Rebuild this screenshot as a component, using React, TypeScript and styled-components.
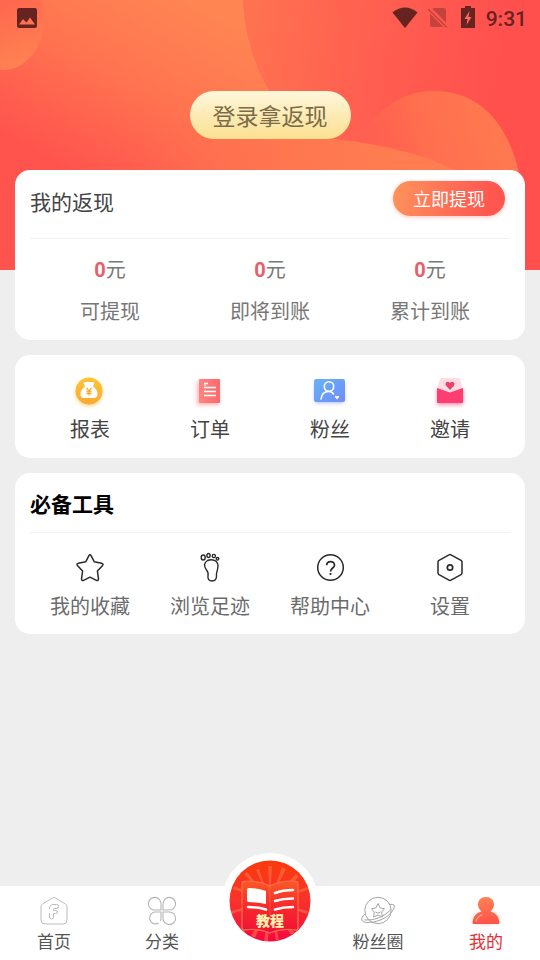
import React from "react";
import styled, { createGlobalStyle } from "styled-components";

const GlobalStyle = createGlobalStyle`
  * { box-sizing: border-box; }
  body {
    margin: 0;
    background: #eeeeee;
    font-family: Roboto, "Noto Sans CJK SC", sans-serif;
  }
  button { font-family: inherit; border: 0; padding: 0; background: none; cursor: pointer; }
`;

const Page = styled.div`
  min-height: 100vh;
  display: flex;
  flex-direction: column;
`;

const Hero = styled.header`
  position: relative;
  display: flex;
  flex-direction: column;
  align-items: center;
  height: 270px;
  margin-bottom: -100px;
  background: #ff5450;
`;

const HeroArt = styled.svg`
  position: absolute;
  inset: 0;
  width: 100%;
  height: 100%;
`;

const StatusBar = styled.div`
  position: relative;
  align-self: stretch;
  display: flex;
  align-items: center;
  justify-content: space-between;
  height: 36px;
  padding: 0 13px 0 15px;
  color: #66231f;
`;

const StatusGroup = styled.div`
  display: flex;
  align-items: center;
`;

const Clock = styled.time`
  margin-left: 10px;
  padding-top: 2px;
  font-size: 21px;
  line-height: 34px;
  font-weight: 500;
`;

const LoginButton = styled.button`
  position: relative;
  margin-top: 55px;
  height: 48px;
  padding: 0 23px;
  border-radius: 24px;
  background: linear-gradient(#fff7dc, #fbe090);
  color: #7a6c49;
  font-family: "Noto Sans CJK SC", sans-serif;
  font-size: 23px;
  line-height: 48px;
`;

const Content = styled.main`
  position: relative;
  flex: 1;
  display: flex;
  flex-direction: column;
  gap: 15px;
  padding: 0 15px 60px;
`;

const Card = styled.section`
  padding: 0 15px;
  border-radius: 15px;
  background: #ffffff;
`;

const CardHeader = styled.div<{ $tall?: boolean }>`
  display: flex;
  align-items: flex-end;
  justify-content: space-between;
  padding: ${(p) => (p.$tall ? "11px 5px 22px 0" : "15px 0 14px")};
  border-bottom: 1px solid #f1f1f1;
`;

const CardTitle = styled.h2<{ $strong?: boolean }>`
  margin: 0;
  font-family: "Noto Sans CJK SC", sans-serif;
  font-size: 21px;
  line-height: 30px;
  font-weight: ${(p) => (p.$strong ? 700 : 400)};
  color: ${(p) => (p.$strong ? "#000000" : "#444444")};
`;

const WithdrawButton = styled.button`
  height: 35px;
  padding: 0 20px;
  border-radius: 18px;
  background: linear-gradient(100deg, #ff935c 0%, #ff5650 85%);
  box-shadow: 0 1px 4px rgba(255, 86, 80, 0.35);
  color: #ffffff;
  font-family: "Noto Sans CJK SC", sans-serif;
  font-size: 18px;
  line-height: 35px;
`;

const StatRow = styled.div`
  display: grid;
  grid-template-columns: repeat(3, 1fr);
  padding: 16px 0 13px;
`;

const Stat = styled.div`
  display: flex;
  flex-direction: column;
  align-items: center;
  gap: 12px;
  font-size: 20px;
  line-height: 30px;
  color: #777777;
`;

const Amount = styled.strong`
  color: #e5606a;
`;

const ShortcutRow = styled.div<{ $compact?: boolean }>`
  display: grid;
  grid-template-columns: repeat(4, 1fr);
  padding: ${(p) => (p.$compact ? "17px 0 12px" : "18px 0 13px")};
`;

const Shortcut = styled.button<{ $muted?: boolean }>`
  display: flex;
  flex-direction: column;
  align-items: center;
  gap: 6px;
  font-size: 20px;
  line-height: 30px;
  color: ${(p) => (p.$muted ? "#6b6b6b" : "#444444")};
`;

const TabBar = styled.nav`
  position: sticky;
  bottom: 0;
  display: grid;
  grid-template-columns: repeat(5, 1fr);
  background: #ffffff;
`;

const Tab = styled.button<{ $active?: boolean }>`
  display: flex;
  flex-direction: column;
  align-items: center;
  gap: 3px;
  padding: 9px 0 6px;
  font-size: 17px;
  line-height: 24px;
  color: ${(p) => (p.$active ? "#e52e36" : "#555555")};
`;

const TutorialSlot = styled.div`
  position: relative;
`;

const TutorialButton = styled.button`
  position: absolute;
  left: 50%;
  bottom: 11px;
  width: 96px;
  height: 96px;
  margin-left: -48px;
  border-radius: 50%;
  background: #ffffff;
  display: grid;
  place-items: center;
`;

const HeroBackground = () => (
  <HeroArt viewBox="0 0 540 270" preserveAspectRatio="none" aria-hidden="true">
    <defs>
      <linearGradient id="warm" gradientUnits="userSpaceOnUse" x1="235" y1="20" x2="130" y2="205">
        <stop offset="0" stopColor="#ff8653" />
        <stop offset="0.5" stopColor="#ff7350" />
        <stop offset="1" stopColor="#ff544e" />
      </linearGradient>
      <linearGradient id="wave" gradientUnits="userSpaceOnUse" x1="150" y1="200" x2="400" y2="140">
        <stop offset="0" stopColor="#ff6c4f" stopOpacity="0" />
        <stop offset="0.5" stopColor="#ff754f" />
        <stop offset="1" stopColor="#ff7d50" />
      </linearGradient>
      <linearGradient id="right" gradientUnits="userSpaceOnUse" x1="245" y1="40" x2="500" y2="75">
        <stop offset="0" stopColor="#ff7250" />
        <stop offset="0.5" stopColor="#ff5f50" />
        <stop offset="1" stopColor="#ff504e" />
      </linearGradient>
      <linearGradient id="hill" gradientUnits="userSpaceOnUse" x1="490" y1="120" x2="365" y2="160">
        <stop offset="0" stopColor="#ff784f" />
        <stop offset="0.55" stopColor="#ff6e4f" />
        <stop offset="1" stopColor="#ff684f" stopOpacity="0" />
      </linearGradient>
      <linearGradient id="corner" gradientUnits="userSpaceOnUse" x1="5" y1="5" x2="30" y2="65">
        <stop offset="0" stopColor="#ff684f" />
        <stop offset="1" stopColor="#ff8352" />
      </linearGradient>
    </defs>
    <rect width="540" height="270" fill="url(#warm)" />
    <path d="M243 0C245 40 256 68 270 92C285 120 305 134 335 139L440 270H540V0Z" fill="url(#right)" />
    <path d="M345 160C370 112 400 91 434 91C480 91 508 124 519 173V190H345Z" fill="url(#hill)" />
    <path d="M150 120L300 130Q315 137 335 139C385 145 420 153 455 170V180H120Z" fill="url(#wave)" />
    <ellipse cx="3" cy="20" rx="41" ry="50" fill="url(#corner)" />
  </HeroArt>
);

const PictureIcon = () => (
  <svg width="24" height="24" viewBox="0 0 24 24" aria-hidden="true">
    <path fill="currentColor" fillRule="evenodd" d="M4 2H20Q22 2 22 4V20Q22 22 20 22H4Q2 22 2 20V4Q2 2 4 2ZM4 18.500H20L15 11.500L11.500 16.500L8 13Z" />
  </svg>
);

const WifiIcon = () => (
  <svg width="26" height="24" viewBox="0 0 26 24" aria-hidden="true">
    <path fill="currentColor" d="M13 22L0.500 6.500Q13-3.500 25.500 6.500Z" />
  </svg>
);

const NoSimIcon = () => (
  <svg width="42" height="24" viewBox="0 0 42 24" aria-hidden="true">
    <g opacity="0.38">
      <path fill="currentColor" d="M14.500 3L16 2H26Q28 2 28 4V16.500ZM12 7.500L25.500 21H14Q12 21 12 19Z" />
      <path stroke="currentColor" strokeWidth="1.500" d="M10 3L29 21.500" />
    </g>
  </svg>
);

const BatteryIcon = () => (
  <svg width="16" height="24" viewBox="0 0 16 24" aria-hidden="true">
    <path fill="currentColor" d="M5 0H11V2H15V22H1V2H5Z" />
    <path fill="#ff6a62" d="M9.500 5L4.500 13H7.500L6.500 19L11.500 11H8.500Z" />
  </svg>
);

const ReportIcon = () => (
  <svg width="36" height="36" viewBox="0 0 36 36" aria-hidden="true">
    <defs>
      <linearGradient id="gold" x1="0" y1="0" x2="0" y2="1">
        <stop offset="0" stopColor="#ffc533" />
        <stop offset="1" stopColor="#fba932" />
      </linearGradient>
      <filter id="soft" x="-30%" y="-30%" width="160%" height="160%"><feGaussianBlur stdDeviation="2" /></filter>
    </defs>
    <circle cx="17" cy="20" r="13" fill="#ffc760" opacity="0.8" filter="url(#soft)" />
    <circle cx="17" cy="18" r="13.500" fill="url(#gold)" />
    <path fill="#fff" d="M12 11Q11 9 13.500 9H20.500Q23 9 22 11L21 13.500Q26 17 25.500 22Q25 25 22 25H12Q9 25 8.500 22Q8 17 13 13.500Z" />
    <path d="M14.500 15L17 18L19.500 15M17 18V22.500M14.500 18.500H19.500M14.500 20.500H19.500" stroke="#f9ad2c" strokeWidth="1.300" fill="none" />
  </svg>
);

const OrderIcon = () => (
  <svg width="36" height="36" viewBox="0 0 36 36" aria-hidden="true">
    <defs>
      <linearGradient id="coral" x1="0" y1="0" x2="1" y2="0">
        <stop offset="0" stopColor="#ff857f" />
        <stop offset="1" stopColor="#fe686d" />
      </linearGradient>
    </defs>
    <rect x="5" y="9" width="22" height="23" fill="#ff7777" opacity="0.55" filter="url(#soft)" />
    <rect x="7" y="6" width="21" height="24" rx="1" fill="url(#coral)" />
    <path d="M12 10.500H16M12 14.500H24M12 18.500H24M12 22.500H24" stroke="#fff" strokeWidth="1.500" />
    <path d="M12 12H14" stroke="#fff" strokeWidth="1" />
  </svg>
);

const FansIcon = () => (
  <svg width="36" height="36" viewBox="0 0 36 36" aria-hidden="true">
    <defs>
      <linearGradient id="blue" x1="0" y1="0" x2="1" y2="1">
        <stop offset="0" stopColor="#67b3f4" />
        <stop offset="1" stopColor="#708bfa" />
      </linearGradient>
    </defs>
    <rect x="3" y="10" width="29" height="20" rx="2" fill="#7994fa" opacity="0.6" filter="url(#soft)" />
    <rect x="2" y="6" width="31" height="23" rx="2" fill="url(#blue)" />
    <g fill="none" stroke="#fff" strokeWidth="1.600" strokeLinecap="round">
      <circle cx="17" cy="13.500" r="4.700" />
      <path d="M9 26Q10 18.500 16.500 18.500Q20 18.500 21.500 21" />
    </g>
    <path fill="#fff" d="M25 26.500L22.800 24Q23 22 25 23.200Q27 22 27.200 24Z" />
  </svg>
);

const InviteIcon = () => (
  <svg width="36" height="36" viewBox="0 0 36 36" aria-hidden="true">
    <rect x="5" y="16" width="26" height="16" rx="2" fill="#ff4478" opacity="0.6" filter="url(#soft)" />
    <path d="M8 6Q8 5 10 5H26Q28 5 28 6L31 16V24H5V16Z" fill="#ffdde2" />
    <path d="M5 15L18 19.500L31 15V29Q31 30 30 30H6Q5 30 5 29Z" fill="#fe3d73" />
    <path d="M18 17L13.800 12.500C12.500 9.500 16 7.500 18 10C20 7.500 23.500 9.500 22.200 12.500Z" fill="#ed416c" />
  </svg>
);

const StarIcon = () => (
  <svg width="36" height="36" viewBox="0 0 36 36" fill="none" stroke="#292929" strokeWidth="1.500" strokeLinejoin="round" aria-hidden="true">
    <path d="M16.800 5.800Q18 3.800 19.200 5.800L22.300 11.800L29.600 13.200Q32 14 30.400 15.700L25.400 21L26.500 28.800Q26.500 31.200 24.400 30.400L18 27.200L11.600 30.400Q9.500 31.200 9.500 28.800L10.600 21L5.600 15.700Q4 14 6.400 13.200L13.700 11.800Z" />
  </svg>
);

const FootIcon = () => (
  <svg width="36" height="36" viewBox="0 0 36 36" fill="none" stroke="#292929" strokeWidth="1.400" aria-hidden="true">
    <path d="M15.500 10.500C20 8.500 26 10.500 26 16C26 20 24 22 24.500 26C24.500 29.500 22.500 31 20 31C17 31 15.500 29 16 26C16.500 23.500 16.300 22 14.500 20C11.500 16.500 12 12.500 15.500 10.500Z" />
    <ellipse cx="11.200" cy="7.500" rx="2" ry="2.500" />
    <ellipse cx="16.500" cy="5.500" rx="1.600" ry="2" />
    <circle cx="21.800" cy="6" r="1.600" />
    <circle cx="25.500" cy="8.800" r="1.300" />
  </svg>
);

const HelpIcon = () => (
  <svg width="36" height="36" viewBox="0 0 36 36" fill="none" stroke="#292929" strokeWidth="1.500" aria-hidden="true">
    <circle cx="18.500" cy="17.500" r="12.800" />
    <path strokeWidth="1.700" d="M14.700 15.200C14.700 10.300 22.500 10.300 22.500 15.200C22.500 18 18.500 18 18.500 21.500M18.500 23V25" />
  </svg>
);

const SettingsIcon = () => (
  <svg width="36" height="36" viewBox="0 0 36 36" fill="none" stroke="#292929" strokeWidth="1.500" strokeLinejoin="round" aria-hidden="true">
    <path d="M17 4.800Q18 4.200 19 4.800L29 10.300Q30 11 30 12V23Q30 24 29 24.700L19 30.200Q18 30.800 17 30.200L7 24.700Q6 24 6 23V12Q6 11 7 10.300Z" />
    <circle cx="18" cy="17.500" r="2.700" strokeWidth="1.700" />
  </svg>
);

const HomeIcon = () => (
  <svg width="32" height="32" viewBox="0 0 32 32" fill="none" stroke="#bbbbbb" strokeWidth="1" strokeLinejoin="round" aria-hidden="true">
    <path d="M14.500 3Q16 2 17.500 3L27.500 9Q29 10 29 12V25Q29 29 25 29H7Q3 29 3 25V12Q3 10 4.500 9Z" />
    <path d="M11.500 14Q11.500 9.500 16 9.500H18.500Q20.500 9.500 20.500 11.500T18.500 13.500H16Q15.500 13.500 15.500 14.500V15.500H17.500Q19.500 15.500 19.500 17T17.500 18.500H15.500V22Q15.500 24 13.500 24T11.500 22V18" />
  </svg>
);

const CategoryIcon = () => (
  <svg width="32" height="32" viewBox="0 0 32 32" fill="none" stroke="#b5b5b5" strokeWidth="1.100" aria-hidden="true">
    <path d="M15 15H9A6.300 6.300 0 1 1 15 9ZM17 15H23A6.300 6.300 0 1 0 17 9ZM17 17H23A6.300 6.300 0 1 1 17 23ZM12.500 28Q9 30 5.500 27.500A6.200 6.200 0 0 1 9 17H15V23Q15 25 14.500 26" />
  </svg>
);

const CircleIcon = () => (
  <svg width="36" height="32" viewBox="0 0 36 32" fill="none" stroke="#a5a5a5" strokeWidth="1" strokeLinejoin="round" aria-hidden="true">
    <circle cx="18" cy="15.500" r="13.200" />
    <path d="M30 9.500Q35.500 8.500 34 13C31 21 20 27 9 27.500C0 28 0 23 5 19M4.500 25Q20 26 31 14.500" />
    <path d="M18 8.500L20.200 13L24.500 13.700L21.700 17L22.400 22L18 20L13.600 22L14.300 17L11.500 13.700L15.800 13Z" />
    <path d="M15.500 17Q18 19.500 20.500 17" />
  </svg>
);

const MineIcon = () => (
  <svg width="32" height="32" viewBox="0 0 32 32" aria-hidden="true">
    <defs>
      <linearGradient id="person" gradientUnits="userSpaceOnUse" x1="16" y1="2" x2="16" y2="30">
        <stop offset="0" stopColor="#ff8154" />
        <stop offset="1" stopColor="#ff5049" />
      </linearGradient>
    </defs>
    <ellipse cx="16" cy="23" rx="13" ry="6" fill="#ff7755" opacity="0.45" filter="url(#soft)" />
    <path fill="url(#person)" d="M16 2C21 2 24 5.500 24 9.500C24 13 22 15 20.500 16.500C26 18 29 22 29.500 28Q29.500 29 28.500 29H3.500Q2.500 29 2.500 28C3 22 6 18 11.500 16.500C10 15 8 13 8 9.500C8 5.500 11 2 16 2Z" />
    <path d="M6 26Q7.500 21.500 12 20" stroke="#ffb096" strokeWidth="1.300" strokeLinecap="round" fill="none" />
  </svg>
);

const TutorialIcon = () => (
  <svg width="82" height="82" viewBox="0 0 82 82">
    <defs>
      <linearGradient id="disc" x1="0" y1="0" x2="0" y2="1">
        <stop offset="0" stopColor="#fa3a0c" />
        <stop offset="0.500" stopColor="#f9322b" />
        <stop offset="1" stopColor="#f5073f" />
      </linearGradient>
      <linearGradient id="book" x1="0" y1="0" x2="0" y2="1">
        <stop offset="0" stopColor="#fb5a26" />
        <stop offset="0.450" stopColor="#f92c2a" />
        <stop offset="1" stopColor="#f01038" />
      </linearGradient>
      <clipPath id="discClip"><circle cx="41" cy="41" r="40.500" /></clipPath>
    </defs>
    <circle cx="41" cy="41" r="40.500" fill="url(#disc)" />
    <g clipPath="url(#discClip)" fill="#ff7e50" opacity="0.5">
      <path d="M41 41L39 6L43 6ZM41 41L27 10L30 9ZM41 41L53 7L57 9ZM41 41L15 14L18 12ZM41 41L67 14L70 17ZM41 41L4 29L5 26ZM41 41L78 27L79 30ZM41 41L2 51L3 54ZM41 41L79 51L78 54ZM41 41L22 76L26 78ZM41 41L35 81H39ZM41 41L47 81L50 80ZM41 41L62 75L66 73Z" />
    </g>
    <path d="M15 21.500Q29 20 41 26Q53 20 67 21.500Q69 21.500 69 24V68Q69 70 67 70Q53 68 41 73Q29 68 15 70Q13 70 13 68V24Q13 21.500 15 21.500Z" fill="url(#book)" stroke="#ff6a48" strokeWidth="1.300" />
    <path d="M41 26V56" stroke="#ff6a48" opacity="0.6" />
    <path d="M20 28Q29 28 37 31V44Q28 42 19 42Q18 42 18 40V30Q18 28 20 28Z" fill="#fff" />
    <g stroke="#fff" strokeWidth="2.600" strokeLinecap="round" fill="none">
      <path d="M19 47Q29 47 37 49.500M46 33Q54 30 64 30M46 41Q54 38.500 64 38.500M46 49.500Q54 47 64 47" />
    </g>
    <text x="41" y="66" textAnchor="middle" fontFamily="Noto Sans CJK SC" fontSize="14" fontWeight="900" fill="#fff3b0">教程</text>
  </svg>
);

const stats = ["可提现", "即将到账", "累计到账"];

const features = [
  { label: "报表", Icon: ReportIcon },
  { label: "订单", Icon: OrderIcon },
  { label: "粉丝", Icon: FansIcon },
  { label: "邀请", Icon: InviteIcon },
];

const tools = [
  { label: "我的收藏", Icon: StarIcon },
  { label: "浏览足迹", Icon: FootIcon },
  { label: "帮助中心", Icon: HelpIcon },
  { label: "设置", Icon: SettingsIcon },
];

export default function App() {
  return (
    <Page lang="zh-CN">
      <GlobalStyle />
      <Hero>
        <HeroBackground />
        <StatusBar>
          <PictureIcon />
          <StatusGroup>
            <WifiIcon />
            <NoSimIcon />
            <BatteryIcon />
            <Clock>9:31</Clock>
          </StatusGroup>
        </StatusBar>
        <LoginButton type="button">登录拿返现</LoginButton>
      </Hero>

      <Content>
        <Card>
          <CardHeader $tall>
            <CardTitle>我的返现</CardTitle>
            <WithdrawButton type="button">立即提现</WithdrawButton>
          </CardHeader>
          <StatRow>
            {stats.map((label) => (
              <Stat key={label}>
                <span><Amount>0</Amount>元</span>
                <span>{label}</span>
              </Stat>
            ))}
          </StatRow>
        </Card>

        <Card>
          <ShortcutRow>
            {features.map(({ label, Icon }) => (
              <Shortcut key={label} type="button"><Icon />{label}</Shortcut>
            ))}
          </ShortcutRow>
        </Card>

        <Card>
          <CardHeader>
            <CardTitle $strong>必备工具</CardTitle>
          </CardHeader>
          <ShortcutRow $compact>
            {tools.map(({ label, Icon }) => (
              <Shortcut key={label} type="button" $muted><Icon />{label}</Shortcut>
            ))}
          </ShortcutRow>
        </Card>
      </Content>

      <TabBar>
        <Tab type="button"><HomeIcon />首页</Tab>
        <Tab type="button"><CategoryIcon />分类</Tab>
        <TutorialSlot>
          <TutorialButton type="button"><TutorialIcon /></TutorialButton>
        </TutorialSlot>
        <Tab type="button"><CircleIcon />粉丝圈</Tab>
        <Tab type="button" $active aria-current="page"><MineIcon />我的</Tab>
      </TabBar>
    </Page>
  );
}
